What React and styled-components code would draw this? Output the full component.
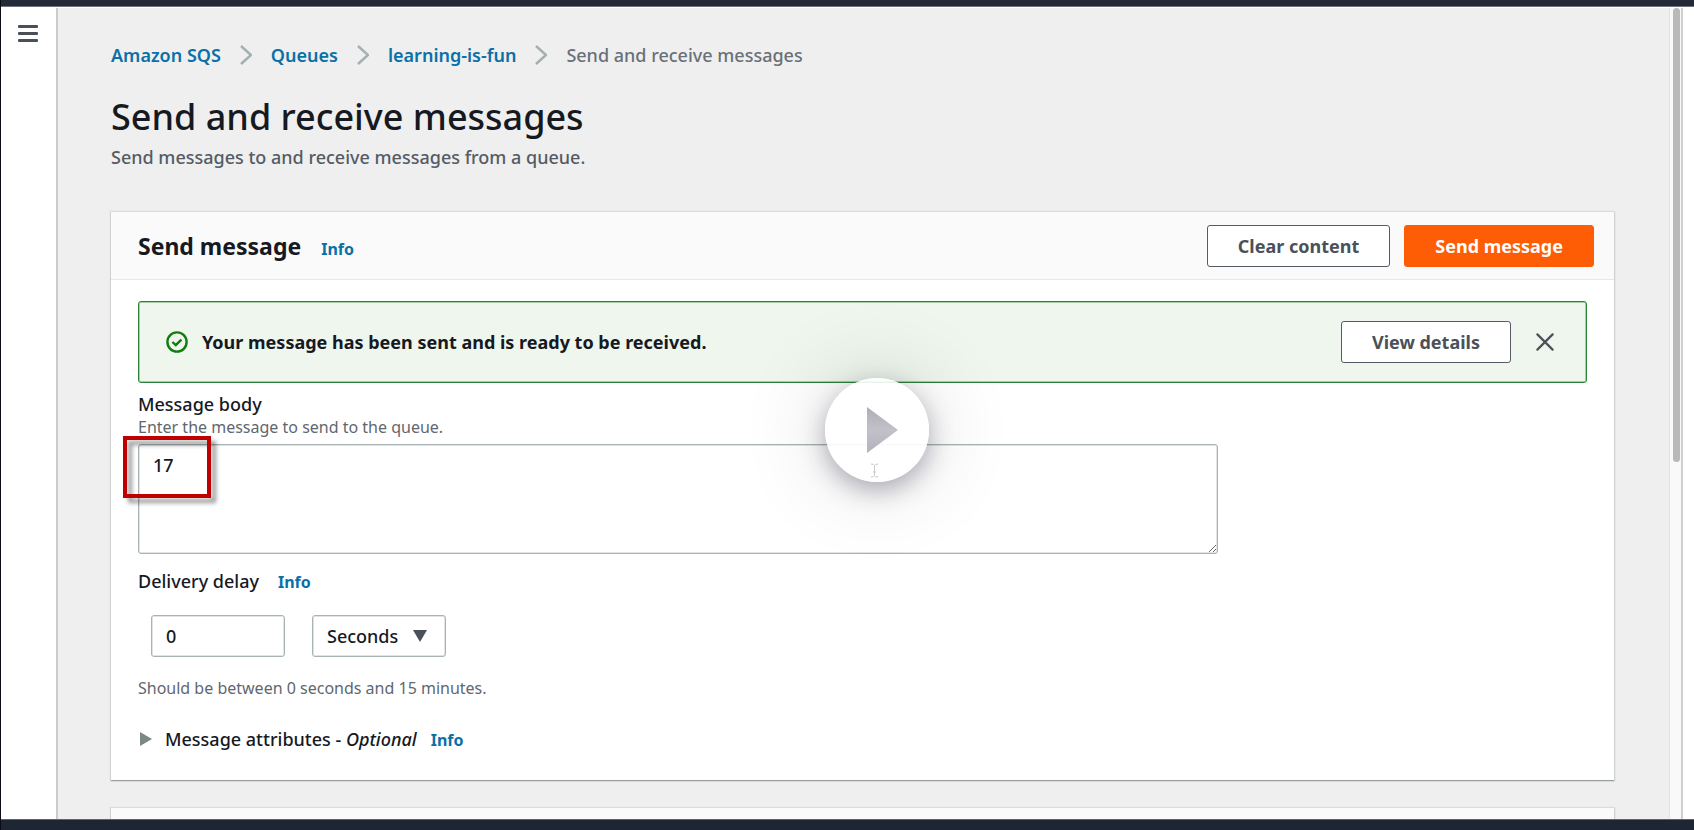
import React from 'react';
import styled, { createGlobalStyle } from 'styled-components';

const GlobalStyle = createGlobalStyle`
  *, *::before, *::after { box-sizing: border-box; }
  body {
    margin: 0;
    font-family: "Noto Sans", "Open Sans", sans-serif;
    font-size: 18px;
    font-weight: 500;
    line-height: 24px;
    color: #16191f;
    background: #ffffff;
  }
  button, input, select, textarea { font: inherit; color: inherit; }
`;

const Page = styled.div`
  position: relative;
  display: flex;
  flex-direction: column;
  height: 100vh;
  overflow: hidden;
  border-left: 1px solid #0b0a16;
`;

const TopBar = styled.header`
  flex: none;
  height: 7px;
  background: #222b37;
  border-bottom: 1px solid #6d737b;
`;

const BottomBar = styled.footer`
  flex: none;
  height: 11px;
  background: #1e2633;
  border-top: 1px solid #5d646d;
`;

const Body = styled.div`
  flex: 1;
  min-height: 0;
  display: flex;
  padding-top: 1px;
`;

const SideNav = styled.nav`
  flex: none;
  width: 57px;
  padding: 17px 0 0 17px;
  border-right: 2px solid #cbcbcb;
`;

const MenuButton = styled.button`
  display: block;
  padding: 0;
  border: 0;
  background: none;
  cursor: pointer;
  svg { display: block; }
`;

const Main = styled.main`
  flex: 1;
  min-width: 0;
  overflow: hidden;
  padding: 35px 55px 0 53px;
  background: #efefef;
`;

const ScrollTrack = styled.div`
  flex: none;
  width: 14px;
  margin-right: 11px;
  padding: 0 1px 0 3px;
  border-left: 1px solid #e3e3e3;
  border-right: 2px solid #cfcfcf;
  background: #f9f9f9;
`;

const ScrollThumb = styled.div`
  height: 56%;
  border-radius: 4px;
  background: #b9b9b9;
`;

const Breadcrumbs = styled.ol`
  display: flex;
  align-items: center;
  gap: 19px;
  margin: 0 0 28px;
  padding: 0;
  list-style: none;
  color: #687078;
  li { display: flex; align-items: center; gap: 19px; }
  svg { display: block; }
`;

const Link = styled.a`
  color: #0a70a8;
  font-weight: 600;
  text-decoration: none;
`;

const InfoLink = styled(Link)`
  font-size: 16px;
  font-weight: 700;
`;

const PageTitle = styled.h1`
  margin: 0 0 6px;
  font-size: 36px;
  line-height: 44px;
  font-weight: 500;
`;

const PageDescription = styled.p`
  margin: 0 0 43px;
  color: #545b64;
`;

const Panel = styled.section`
  margin-bottom: 28px;
  background: #ffffff;
  box-shadow: 0 1px 1px #9a9f9f, 0 0 1px 1px #dcdcdc, 1px 1px 1px 0 #c8c8c8;
`;

const PanelHeader = styled.div`
  display: flex;
  align-items: center;
  justify-content: space-between;
  min-height: 68px;
  padding: 0 20px 0 27px;
  background: #fafafa;
  border-bottom: 1px solid #e6e8e8;
`;

const HeadingRow = styled.div`
  display: flex;
  align-items: baseline;
  gap: ${(p) => p.$gap}px;
`;

const PanelTitle = styled.h2`
  margin: 0;
  font-size: 23px;
  line-height: 30px;
  font-weight: 700;
`;

const Actions = styled.div`
  display: flex;
  align-items: center;
  gap: 14px;
`;

const Button = styled.button`
  height: 42px;
  padding: 0 30px;
  border: 1px solid ${(p) => (p.$primary ? '#fe5d05' : '#545b64')};
  border-radius: 3px;
  background: ${(p) => (p.$primary ? '#fe5d05' : '#ffffff')};
  color: ${(p) => (p.$primary ? '#ffffff' : '#4b5158')};
  font-weight: 700;
  cursor: pointer;
`;

const PanelBody = styled.div`
  padding: 21px 27px 28px;
`;

const Alert = styled.div`
  display: flex;
  align-items: center;
  height: 82px;
  margin-bottom: 9px;
  padding: 0 32px 0 27px;
  border: 1px solid #2c8236;
  border-radius: 3px;
  background: #eef6ee;
  box-shadow: inset 0 0 0 1px #a3cfa6;
  svg { display: block; flex: none; }
`;

const AlertText = styled.strong`
  flex: 1;
  padding-left: 14px;
`;

const CloseButton = styled.button`
  margin-left: 25px;
  padding: 0;
  border: 0;
  background: none;
  cursor: pointer;
`;

const Label = styled.label`
  display: block;
`;

const Hint = styled.p`
  margin: 0 0 6px;
  font-size: 16px;
  font-weight: 400;
  line-height: 22px;
  color: #5f676f;
`;

const TextAreaWrap = styled.div`
  position: relative;
  max-width: 1080px;
  margin-bottom: 15px;
`;

const fieldBox = `
  border: 1px solid #a9b3b4;
  border-radius: 3px;
  background: #ffffff;
  box-shadow: inset 0 0 0 1px #e0e4e4;
  outline: none;
`;

const TextArea = styled.textarea`
  ${fieldBox}
  display: block;
  width: 100%;
  height: 110px;
  padding: 8px 14px;
`;

const Highlight = styled.div`
  position: absolute;
  left: -15px;
  top: -8px;
  width: 88px;
  height: 62px;
  border: 4px solid #c00000;
  filter: drop-shadow(5px 5px 2px rgba(0, 0, 0, 0.4));
  pointer-events: none;
`;

const DelayFields = styled.div`
  display: flex;
  gap: 27px;
  margin: 21px 0 20px 13px;
`;

const NumberInput = styled.input`
  ${fieldBox}
  width: 134px;
  height: 42px;
  padding: 0 14px;
`;

const SelectWrap = styled.div`
  position: relative;
  svg {
    position: absolute;
    right: 19px;
    top: 15px;
    pointer-events: none;
  }
`;

const Select = styled.select`
  ${fieldBox}
  width: 134px;
  height: 42px;
  padding: 0 14px;
  appearance: none;
`;

const DelayHint = styled(Hint)`
  margin: 0 0 28px;
`;

const Expander = styled.button`
  display: flex;
  align-items: center;
  gap: 13px;
  padding: 0 0 0 2px;
  border: 0;
  background: none;
  cursor: pointer;
`;

const PlayButton = styled.button`
  position: absolute;
  left: calc(50% + 29px);
  top: calc(50% + 15px);
  width: 104px;
  height: 104px;
  margin: -52px 0 0 -52px;
  padding: 0;
  border: 0;
  border-radius: 50%;
  background: rgba(255, 255, 255, 0.9);
  box-shadow: 0 8px 24px rgba(40, 36, 62, 0.35), 0 0 90px rgba(0, 0, 0, 0.16);
  cursor: pointer;
  svg { display: block; }
`;

const Chevron = () => (
  <svg width="12" height="20" viewBox="0 0 12 20" fill="none" stroke="#a3b0b0" strokeWidth="2.4" aria-hidden="true">
    <path d="M1 1l10 9-10 9" />
  </svg>
);

const trail = ['Amazon SQS', 'Queues', 'learning-is-fun'];

export default function App() {
  return (
    <>
      <GlobalStyle />
      <Page>
        <TopBar />
        <Body>
          <SideNav>
            <MenuButton aria-label="Open navigation">
              <svg width="20" height="18" viewBox="0 0 20 18" fill="#4a5059">
                <rect x="0" y="0" width="20" height="3" rx="1" />
                <rect x="0" y="7" width="20" height="3" rx="1" />
                <rect x="0" y="14" width="20" height="3" rx="1" />
              </svg>
            </MenuButton>
          </SideNav>

          <Main>
            <Breadcrumbs>
              {trail.map((name) => (
                <li key={name}>
                  <Link href="#">{name}</Link>
                  <Chevron />
                </li>
              ))}
              <li>Send and receive messages</li>
            </Breadcrumbs>

            <PageTitle>Send and receive messages</PageTitle>
            <PageDescription>Send messages to and receive messages from a queue.</PageDescription>

            <Panel>
              <PanelHeader>
                <HeadingRow $gap={20}>
                  <PanelTitle>Send message</PanelTitle>
                  <InfoLink href="#">Info</InfoLink>
                </HeadingRow>
                <Actions>
                  <Button>Clear content</Button>
                  <Button $primary>Send message</Button>
                </Actions>
              </PanelHeader>

              <PanelBody>
                <Alert role="status">
                  <svg width="22" height="22" viewBox="0 0 22 22" fill="none" stroke="#127c0c" strokeWidth="2.4" aria-hidden="true">
                    <circle cx="11" cy="11" r="9.6" />
                    <path d="M6.4 11l3.4 3.2 5.6-5.6" />
                  </svg>
                  <AlertText>Your message has been sent and is ready to be received.</AlertText>
                  <Button>View details</Button>
                  <CloseButton aria-label="Dismiss">
                    <svg width="18" height="18" viewBox="0 0 18 18" stroke="#4b5158" strokeWidth="2.2" strokeLinecap="round">
                      <path d="M1.4 1.4l15.2 15.2M16.6 1.4L1.4 16.6" />
                    </svg>
                  </CloseButton>
                </Alert>

                <Label htmlFor="body">Message body</Label>
                <Hint id="body-hint">Enter the message to send to the queue.</Hint>
                <TextAreaWrap>
                  <TextArea id="body" aria-describedby="body-hint" defaultValue="17" />
                  <Highlight />
                </TextAreaWrap>

                <HeadingRow $gap={19}>
                  <Label htmlFor="delay">Delivery delay</Label>
                  <InfoLink href="#">Info</InfoLink>
                </HeadingRow>
                <DelayFields>
                  <NumberInput id="delay" inputMode="numeric" defaultValue="0" />
                  <SelectWrap>
                    <Select aria-label="Delay unit" defaultValue="Seconds">
                      <option>Seconds</option>
                      <option>Minutes</option>
                    </Select>
                    <svg width="14" height="12" viewBox="0 0 14 12" fill="#4b5158" aria-hidden="true">
                      <path d="M0 0h14L7 12z" />
                    </svg>
                  </SelectWrap>
                </DelayFields>
                <DelayHint>Should be between 0 seconds and 15 minutes.</DelayHint>

                <HeadingRow $gap={14}>
                  <Expander aria-expanded="false">
                    <svg width="12" height="14" viewBox="0 0 12 14" fill="#7c8787" aria-hidden="true">
                      <path d="M0 0l12 7-12 7z" />
                    </svg>
                    <span>
                      Message attributes - <em>Optional</em>
                    </span>
                  </Expander>
                  <InfoLink href="#">Info</InfoLink>
                </HeadingRow>
              </PanelBody>
            </Panel>

            <Panel>
              <PanelHeader />
            </Panel>
          </Main>

          <ScrollTrack>
            <ScrollThumb />
          </ScrollTrack>
        </Body>
        <BottomBar />

        <PlayButton aria-label="Play video">
          <svg width="104" height="104" viewBox="0 0 104 104">
            <defs>
              <linearGradient id="play" x1="0" y1="0" x2="0" y2="1">
                <stop offset="0" stopColor="#aeaeb5" />
                <stop offset="0.5" stopColor="#c2c1ca" />
                <stop offset="1" stopColor="#b3b2bd" />
              </linearGradient>
            </defs>
            <path d="M42 29l31 23-31 23z" fill="url(#play)" />
            <path d="M46 86q3 0 3.500 1.500q.5-1.500 3.500-1.500M46 99q3 0 3.500-1.500q.5 1.500 3.500 1.500M49.500 87v11M48 94h3" fill="none" stroke="#c9c9c9" />
          </svg>
        </PlayButton>
      </Page>
    </>
  );
}
